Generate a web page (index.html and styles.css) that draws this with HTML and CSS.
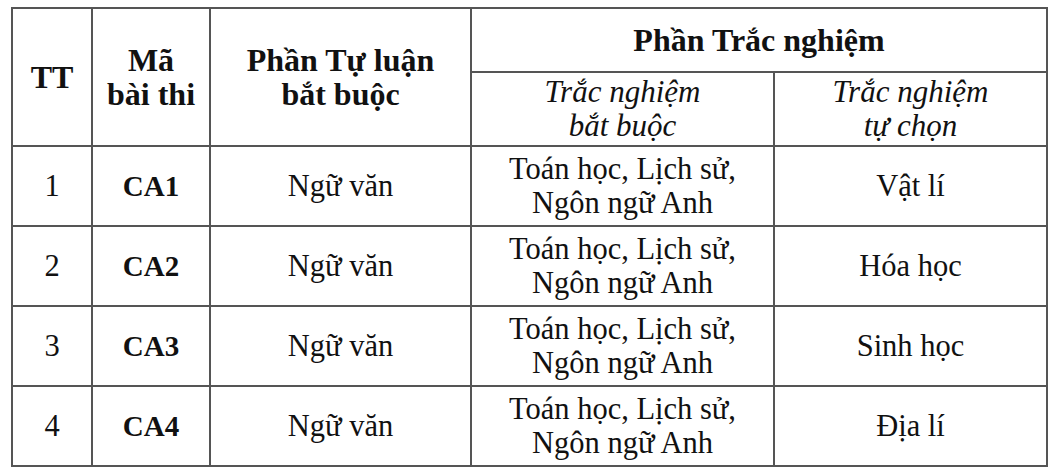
FILE: index.html
```html
<!DOCTYPE html>
<html lang="vi">
<head>
<meta charset="utf-8">
<title>Bảng bài thi</title>
<link rel="stylesheet" href="styles.css">
</head>
<body>
<table class="exam">
  <colgroup>
    <col class="c-tt">
    <col class="c-ma">
    <col class="c-tl">
    <col class="c-bb">
    <col class="c-tc">
  </colgroup>
  <thead>
    <tr class="h1">
      <th rowspan="2">TT</th>
      <th rowspan="2">Mã<br>bài thi</th>
      <th rowspan="2">Phần Tự luận<br>bắt buộc</th>
      <th colspan="2">Phần Trắc nghiệm</th>
    </tr>
    <tr class="h2">
      <th class="sub">Trắc nghiệm<br>bắt buộc</th>
      <th class="sub">Trắc nghiệm<br>tự chọn</th>
    </tr>
  </thead>
  <tbody>
    <tr>
      <td>1</td>
      <td class="code">CA1</td>
      <td>Ngữ văn</td>
      <td>Toán học, Lịch sử,<br>Ngôn ngữ Anh</td>
      <td>Vật lí</td>
    </tr>
    <tr>
      <td>2</td>
      <td class="code">CA2</td>
      <td>Ngữ văn</td>
      <td>Toán học, Lịch sử,<br>Ngôn ngữ Anh</td>
      <td>Hóa học</td>
    </tr>
    <tr>
      <td>3</td>
      <td class="code">CA3</td>
      <td>Ngữ văn</td>
      <td>Toán học, Lịch sử,<br>Ngôn ngữ Anh</td>
      <td>Sinh học</td>
    </tr>
    <tr>
      <td>4</td>
      <td class="code">CA4</td>
      <td>Ngữ văn</td>
      <td>Toán học, Lịch sử,<br>Ngôn ngữ Anh</td>
      <td>Địa lí</td>
    </tr>
  </tbody>
</table>
</body>
</html>
```

FILE: styles.css
```css
html, body {
  margin: 0;
  padding: 0;
  background: #ffffff;
}

body {
  padding: 7px 0 0 11px;
  font-family: "Liberation Serif", "Times New Roman", serif;
  color: #111111;
}

.exam {
  border-collapse: collapse;
  table-layout: fixed;
  width: 1035px;
  font-size: 30.5px;
  line-height: 34.5px;
}

.c-tt { width: 80px; }
.c-ma { width: 118px; }
.c-tl { width: 261px; }
.c-bb { width: 303px; }
.c-tc { width: 273px; }

.exam th,
.exam td {
  border: 2px solid #555555;
  padding: 0;
  text-align: center;
  vertical-align: middle;
}

.exam th {
  font-weight: bold;
  font-size: 32px;
}

.exam th.sub {
  font-weight: normal;
  font-style: italic;
  font-size: 31px;
}

.h1 { height: 64px; }
.h2 { height: 74px; }
.exam tbody tr { height: 80px; }

.exam td.code {
  font-weight: bold;
  font-size: 29px;
}
```
